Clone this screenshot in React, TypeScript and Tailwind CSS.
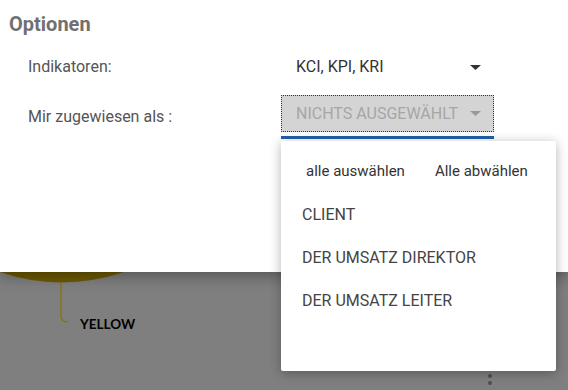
import React from 'react';

function Caret({ color }: { color: string }) {
  return (
    <svg width="11" height="5" viewBox="0 0 11 5" className="shrink-0">
      <path d="M0 0 L11 0 L5.5 5 Z" fill={color} />
    </svg>
  );
}

const roles = ['CLIENT', 'DER UMSATZ DIREKTOR', 'DER UMSATZ LEITER'];

export default function App() {
  return (
    <div className="relative w-[568px] h-[390px] overflow-hidden bg-[#7f7f7f] font-['Roboto',sans-serif]">
      {/* page behind the overlay */}
      <div className="absolute left-0 top-[272px] w-full">
        <svg width="160" height="70" viewBox="0 0 160 70" className="block">
          <path d="M0 0 Q61 21 124 0 Z" fill="#6e5a00" />
          <path d="M61 10 L61 44 Q61 50 68 50" stroke="#8a7200" strokeWidth="1.2" fill="none" />
        </svg>
        <span className="absolute left-[80px] top-[44px] text-[13.5px] leading-4 font-bold text-black font-['Lato',sans-serif]">
          YELLOW
        </span>
        <div className="absolute left-[488px] top-[102px] flex flex-col gap-[3px]">
          <span className="w-[4px] h-[4px] rounded-full bg-[#505050]" />
          <span className="w-[4px] h-[4px] rounded-full bg-[#505050]" />
        </div>
      </div>

      {/* dialog */}
      <div className="relative h-[272px] w-full bg-white shadow-[0_4px_14px_rgba(0,0,0,0.35)]">
        <h2 className="pt-[10px] pl-[9px] text-[20px] leading-7 font-bold text-[#707070]">Optionen</h2>

        <div className="mt-[11px] flex h-[36px] items-center">
          <div className="w-[281px] pl-[28px] text-[16px] leading-5 text-[#555]">Indikatoren:</div>
          <div className="flex w-[213px] items-center justify-between pl-[15px] pr-[13px] text-[16px] leading-5 text-[#333]">
            <span>KCI, KPI, KRI</span>
            <Caret color="#333" />
          </div>
        </div>

        <div className="mt-[10px] flex items-start">
          <div className="mt-[12px] w-[281px] pl-[28px] text-[16px] leading-5 text-[#555]">Mir zugewiesen als :</div>
          <div className="w-[213px]">
            <div className="flex h-[37px] items-center justify-between border border-dotted border-[#333] bg-[#d4d4d4] pl-[14px] pr-[12px] text-[16px] leading-5 text-[#a6a6a6]">
              <span>NICHTS AUSGEWÄHLT</span>
              <Caret color="#999" />
            </div>
            <div className="mt-[4px] h-[3px] bg-[#1f5fa9]" />
          </div>
        </div>
      </div>

      {/* open dropdown menu */}
      <div className="absolute left-[281px] top-[141px] w-[275px] h-[230px] rounded-[2px] bg-white shadow-[0_2px_12px_rgba(0,0,0,0.3)]">
        <div className="flex pt-[20px] text-[15px] leading-5 text-[#333]">
          <span className="ml-[25px]">alle auswählen</span>
          <span className="ml-[30px]">Alle abwählen</span>
        </div>
        <div className="mt-[12px] flex flex-col">
          {roles.map((r) => (
            <div key={r} className="flex h-[43px] items-center pl-[21px] text-[16px] leading-5 text-[#444]">
              {r}
            </div>
          ))}
        </div>
      </div>
    </div>
  );
}
